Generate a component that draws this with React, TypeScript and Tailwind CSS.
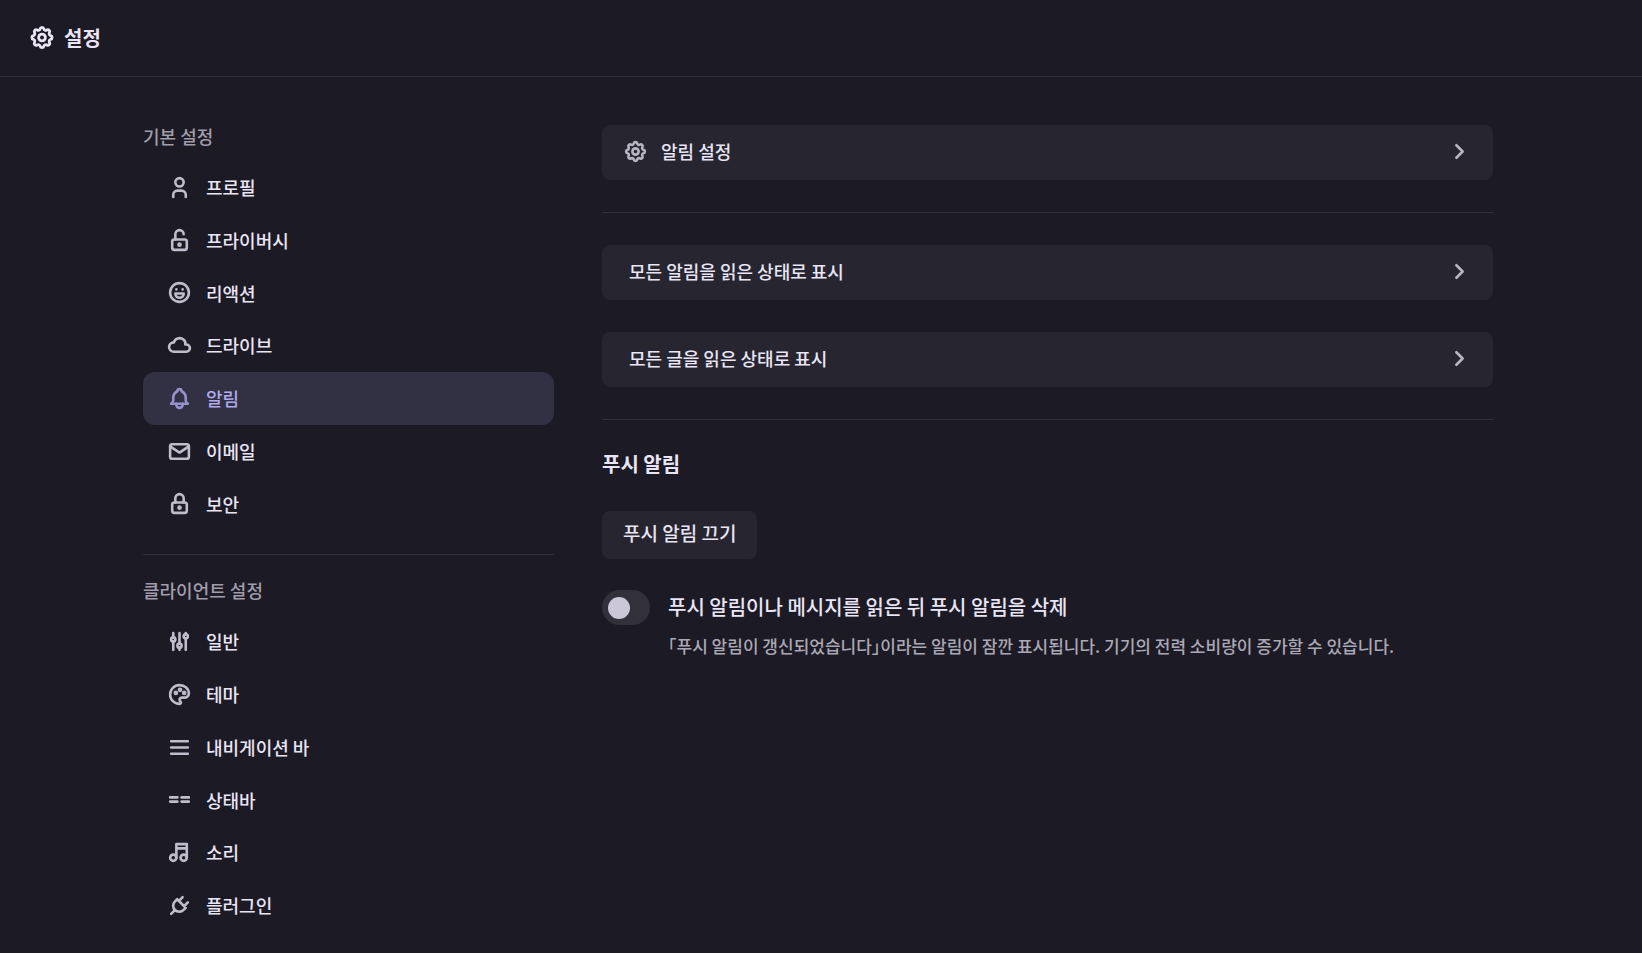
import { useState, type ReactNode } from "react";

function Icon({ children, className = "" }: { children: ReactNode; className?: string }) {
  return (
    <svg
      aria-hidden="true"
      viewBox="0 0 24 24"
      fill="none"
      stroke="currentColor"
      strokeWidth="2.5"
      strokeLinecap="round"
      strokeLinejoin="round"
      className={`shrink-0 ${className}`}
    >
      {children}
    </svg>
  );
}

const gear = (
  <>
    <path d="M10.325 4.317c.426 -1.756 2.924 -1.756 3.35 0a1.724 1.724 0 0 0 2.573 1.066c1.543 -.94 3.31 .826 2.37 2.37a1.724 1.724 0 0 0 1.065 2.572c1.756 .426 1.756 2.924 0 3.35a1.724 1.724 0 0 0 -1.066 2.573c.94 1.543 -.826 3.31 -2.37 2.37a1.724 1.724 0 0 0 -2.572 1.065c-.426 1.756 -2.924 1.756 -3.35 0a1.724 1.724 0 0 0 -2.573 -1.066c-1.543 .94 -3.31 -.826 -2.37 -2.37a1.724 1.724 0 0 0 -1.065 -2.572c-1.756 -.426 -1.756 -2.924 0 -3.35a1.724 1.724 0 0 0 1.066 -2.573c-.94 -1.543 .826 -3.31 2.37 -2.37c1 .608 2.296 .07 2.572 -1.065z" />
    <circle cx="12" cy="12" r="3" />
  </>
);

const chevron = <path d="M9 6l6 6l-6 6" />;

type Item = { label: string; icon: ReactNode };

const groups: { title: string; items: Item[] }[] = [
  {
    title: "기본 설정",
    items: [
      {
        label: "프로필",
        icon: (
          <>
            <circle cx="12" cy="7" r="4" />
            <path d="M6 21v-2a4 4 0 0 1 4 -4h4a4 4 0 0 1 4 4v2" />
          </>
        ),
      },
      {
        label: "프라이버시",
        icon: (
          <>
            <rect x="5" y="11" width="14" height="10" rx="2" />
            <circle cx="12" cy="16" r="1" />
            <path d="M8 11v-5a4 4 0 0 1 8 0" />
          </>
        ),
      },
      {
        label: "리액션",
        icon: (
          <>
            <circle cx="12" cy="12" r="9" />
            <path d="M9 9h.01M15 9h.01" />
            <path d="M8 13a4 4 0 1 0 8 0h-8" />
          </>
        ),
      },
      {
        label: "드라이브",
        icon: (
          <path d="M6.657 18c-2.572 0 -4.657 -2.007 -4.657 -4.483c0 -2.475 2.085 -4.482 4.657 -4.482c.393 -1.762 1.794 -3.2 3.675 -3.773c1.88 -.572 3.956 -.193 5.444 1c1.488 1.19 2.162 3.007 1.77 4.769h.99c1.913 0 3.464 1.56 3.464 3.486c0 1.927 -1.551 3.487 -3.465 3.487h-11.878" />
        ),
      },
      {
        label: "알림",
        icon: (
          <>
            <path d="M10 5a2 2 0 1 1 4 0a7 7 0 0 1 4 6v3a4 4 0 0 0 2 3h-16a4 4 0 0 0 2 -3v-3a7 7 0 0 1 4 -6" />
            <path d="M9 17v1a3 3 0 0 0 6 0v-1" />
          </>
        ),
      },
      {
        label: "이메일",
        icon: (
          <>
            <rect x="3" y="5" width="18" height="14" rx="2" />
            <path d="M3 7l9 6l9 -6" />
          </>
        ),
      },
      {
        label: "보안",
        icon: (
          <>
            <rect x="5" y="11" width="14" height="10" rx="2" />
            <circle cx="12" cy="16" r="1" />
            <path d="M8 11v-4a4 4 0 0 1 8 0v4" />
          </>
        ),
      },
    ],
  },
  {
    title: "클라이언트 설정",
    items: [
      {
        label: "일반",
        icon: (
          <>
            <circle cx="6" cy="10" r="2" />
            <path d="M6 4v4M6 12v8" />
            <circle cx="12" cy="16" r="2" />
            <path d="M12 4v10M12 18v2" />
            <circle cx="18" cy="7" r="2" />
            <path d="M18 4v1M18 9v11" />
          </>
        ),
      },
      {
        label: "테마",
        icon: (
          <>
            <path d="M12 21a9 9 0 0 1 0 -18c4.97 0 9 3.582 9 8c0 1.06 -.474 2.078 -1.318 2.828c-.844 .75 -1.989 1.172 -3.182 1.172h-2.5a2 2 0 0 0 -1 3.75a1.3 1.3 0 0 1 -1 2.25" />
            <circle cx="8.5" cy="10.5" r="1" />
            <circle cx="12.5" cy="7.5" r="1" />
            <circle cx="16.5" cy="10.5" r="1" />
          </>
        ),
      },
      { label: "내비게이션 바", icon: <path d="M4 6h16M4 12h16M4 18h16" /> },
      { label: "상태바", icon: <path d="M3 10h7M14 10h7M3 14h7M14 14h7" /> },
      {
        label: "소리",
        icon: (
          <>
            <circle cx="6" cy="17" r="3" />
            <circle cx="16" cy="17" r="3" />
            <path d="M9 17v-13h10v13M9 8h10" />
          </>
        ),
      },
      {
        label: "플러그인",
        icon: (
          <path d="M9.785 6l8.215 8.215l-2.054 2.054a5.81 5.81 0 1 1 -8.215 -8.215l2.054 -2.054zM4 20l3.5 -3.5M15 4l-3.5 3.5M20 9l-3.5 3.5" />
        ),
      },
    ],
  },
];

function Sidebar() {
  const [active, setActive] = useState("알림");
  return (
    <nav aria-label="설정" className="flex w-[411px] shrink-0 flex-col text-lg leading-snug">
      {groups.map((group, i) => (
        <section key={group.title} className={i > 0 ? "mt-6 border-t border-[#302e3c] pt-6" : ""}>
          <h2 className="mb-3.5 leading-[22px] text-[#a09dab]">{group.title}</h2>
          <ul>
            {group.items.map(({ label, icon }) => (
              <li key={label}>
                <a
                  href="#"
                  aria-current={active === label ? "page" : undefined}
                  onClick={(e) => {
                    e.preventDefault();
                    setActive(label);
                  }}
                  className={`flex items-center gap-3.5 rounded-xl px-6 py-3.5 ${
                    active === label ? "bg-[#323143] text-[#b0aaee]" : ""
                  }`}
                >
                  <Icon className="-my-1 size-[25px] opacity-80">{icon}</Icon>
                  {label}
                </a>
              </li>
            ))}
          </ul>
        </section>
      ))}
    </nav>
  );
}

function CardRow({ label, icon }: { label: string; icon?: ReactNode }) {
  return (
    <button
      type="button"
      className="flex w-full items-center rounded-lg bg-[#272530] px-[21px] pt-3.5 pb-4 text-left text-lg leading-[25px]"
    >
      {icon && <Icon className="mr-[7px] size-[25px] opacity-75">{icon}</Icon>}
      <span className="flex-1 pl-1.5">{label}</span>
      <Icon className="size-[25px] opacity-75">{chevron}</Icon>
    </button>
  );
}

export default function App() {
  const [removeRead, setRemoveRead] = useState(false);
  return (
    <div className="min-h-screen bg-[#1c1a24] font-['Noto_Sans_CJK_KR',sans-serif] font-medium text-[#e9e5f5]">
      <header className="flex items-center gap-2 border-b border-[#302e3c] px-7 py-6">
        <Icon className="size-7 pb-px">{gear}</Icon>
        <h1 className="text-xl leading-7 font-bold">설정</h1>
      </header>

      <div className="mx-auto flex max-w-[1356px] gap-12 pt-12 pr-1.5 pb-6">
        <Sidebar />

        <main className="min-w-0 flex-1">
          <CardRow label="알림 설정" icon={gear} />
          <hr className="my-8 border-[#302e3c]" />
          <div className="flex flex-col gap-8">
            <CardRow label="모든 알림을 읽은 상태로 표시" />
            <CardRow label="모든 글을 읽은 상태로 표시" />
          </div>

          <section className="mt-8 border-t border-[#302e3c] pt-8">
            <h2 className="text-xl leading-6 font-bold">푸시 알림</h2>
            <button
              type="button"
              className="mt-[35px] rounded-lg bg-[#272530] px-[21px] pt-2 pb-3 text-[19px] leading-7"
            >
              푸시 알림 끄기
            </button>

            <div className="mt-[31px] flex items-start gap-[18px]">
              <input
                id="remove-read"
                type="checkbox"
                role="switch"
                checked={removeRead}
                onChange={(e) => setRemoveRead(e.target.checked)}
                aria-describedby="remove-read-note"
                className="flex h-[35px] w-12 shrink-0 appearance-none items-center rounded-full bg-[#32303b] px-1.5 before:size-[22px] before:rounded-full before:bg-[#cbc7d7] checked:justify-end checked:bg-[#5a5488]"
              />
              <div>
                <label htmlFor="remove-read" className="block text-xl leading-[34px]">
                  푸시 알림이나 메시지를 읽은 뒤 푸시 알림을 삭제
                </label>
                <p
                  id="remove-read-note"
                  className="mt-2.5 text-[17px] leading-6 text-[#aba8b5] [font-feature-settings:'halt']"
                >
                  「푸시 알림이 갱신되었습니다」이라는 알림이 잠깐 표시됩니다. 기기의 전력 소비량이 증가할 수
                  있습니다.
                </p>
              </div>
            </div>
          </section>
        </main>
      </div>
    </div>
  );
}
